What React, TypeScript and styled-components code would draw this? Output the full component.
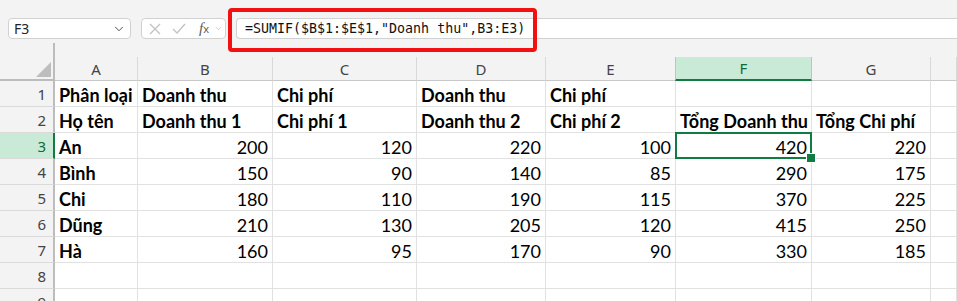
import React from "react";
import styled, { createGlobalStyle, css } from "styled-components";
import { ChevronDown } from "lucide-react";

const GlobalStyle = createGlobalStyle`
  html, body { margin: 0; padding: 0; background: #f3f3f3; }
  body { width: 957px; height: 301px; overflow: hidden; }
  * { box-sizing: border-box; }
`;

const uiFont = `"Noto Sans", "Open Sans", sans-serif`;
const cellFont = `Lato, "Noto Sans", sans-serif`;

const Window = styled.div`
  width: 957px;
  height: 301px;
  background: #f3f3f3;
  display: flex;
  flex-direction: column;
  overflow: hidden;
`;

const FormulaBar = styled.div`
  display: flex;
  align-items: stretch;
  gap: 10px;
  height: 24px;
  margin-top: 18px;
  padding-left: 8px;
`;

const NameBox = styled.div`
  width: 123px;
  background: #fff;
  border: 1px solid #d1d1d1;
  border-radius: 4px;
  display: flex;
  align-items: center;
  justify-content: space-between;
  padding: 0 4px 0 5px;
  font-family: ${uiFont};
  font-size: 14px;
  color: #242424;
`;

const FxBox = styled.div`
  width: 85px;
  background: #fff;
  border: 1px solid #d1d1d1;
  border-radius: 4px;
  display: flex;
  align-items: center;
  padding-left: 7px;
  gap: 11px;
  color: #c4c4c4;
`;

const FxLabel = styled.span`
  display: flex;
  align-items: baseline;
  font-family: "Liberation Serif", serif;
  font-style: italic;
  color: #5c5c5c;
  font-size: 15px;
  margin-left: 2px;
  gap: 0;
  & > small {
    font-family: ${uiFont};
    font-style: normal;
    font-size: 11px;
    margin-left: 0px;
  }
`;

const FormulaInput = styled.div`
  position: relative;
  flex: 1;
  background: #fff;
  border: 1px solid #d1d1d1;
  border-right: none;
  border-radius: 4px 0 0 4px;
  display: flex;
  align-items: center;
  padding-left: 8px;
  font-family: "DejaVu Sans Mono", "Liberation Mono", monospace;
  font-size: 13.3px;
  color: #111;
  white-space: pre;
`;

/* red annotation frame drawn over the start of the formula field */
const Highlight = styled.div`
  position: absolute;
  left: -9px;
  top: -11px;
  width: 309px;
  height: 44px;
  border: 4px solid #f21010;
  border-radius: 4px;
  pointer-events: none;
`;

const Sheet = styled.div`
  display: grid;
  grid-template-columns: 55px 83px 135px 144px 129px 130px 136px 119px 1fr;
  grid-template-rows: 42px repeat(9, 26px);
`;

const Corner = styled.div`
  align-self: end;
  height: 38px;
  border-right: 2px solid #bcbcbc;
  border-bottom: 2px solid #bcbcbc;
  display: flex;
  align-items: flex-end;
  justify-content: flex-end;
  padding: 0 2px 2px 0;
`;

const Triangle = styled.div`
  width: 0;
  height: 0;
  border-left: 15px solid transparent;
  border-bottom: 15px solid #bdbdbd;
`;

const ColHead = styled.div<{ $active?: boolean }>`
  align-self: end;
  height: 24px;
  display: flex;
  align-items: center;
  justify-content: center;
  font-family: ${uiFont};
  font-size: 15px;
  color: #444;
  border-right: 1px solid #d9d9d9;
  border-bottom: 1px solid #c8c8c8;
  ${(p) =>
    p.$active &&
    css`
      background: #caead8;
      color: #0e6b36;
      border-left: 1px solid #9fd6b6;
      border-right: 1px solid #9fd6b6;
      margin-left: -1px;
      border-bottom: 2px solid #107c41;
    `}
`;

const RowHead = styled.div<{ $active?: boolean }>`
  display: flex;
  align-items: center;
  justify-content: flex-end;
  padding-right: 7px;
  font-family: ${uiFont};
  font-size: 15px;
  color: #444;
  border-right: 2px solid #bcbcbc;
  border-bottom: 1px solid #dadada;
  ${(p) =>
    p.$active &&
    css`
      background: #caead8;
      color: #0e6b36;
      border-right: 2px solid #107c41;
    `}
`;

const Cell = styled.div<{ $num?: boolean; $selected?: boolean }>`
  position: relative;
  background: #fff;
  display: flex;
  align-items: center;
  justify-content: ${(p) => (p.$num ? "flex-end" : "flex-start")};
  padding: 2px 4px 0 4px;
  font-family: ${cellFont};
  font-size: 18px;
  font-weight: ${(p) => (p.$num ? 400 : 700)};
  color: #000;
  white-space: nowrap;
  overflow: visible;
  border-right: 1px solid #e1e1e1;
  border-bottom: 1px solid #e1e1e1;
  ${(p) =>
    p.$selected &&
    css`
      &::after {
        content: "";
        position: absolute;
        left: -1px;
        top: -1px;
        right: -1px;
        bottom: -1px;
        border: 2px solid #107c41;
        pointer-events: none;
      }
      &::before {
        content: "";
        position: absolute;
        right: -5px;
        bottom: -5px;
        width: 8px;
        height: 8px;
        background: #107c41;
        border: 1px solid #fff;
        z-index: 2;
      }
    `}
`;

const columns = ["A", "B", "C", "D", "E", "F", "G", ""];

const rows: (string | number | null)[][] = [
  ["Phân loại", "Doanh thu", "Chi phí", "Doanh thu", "Chi phí", null, null, null],
  ["Họ tên", "Doanh thu 1", "Chi phí 1", "Doanh thu 2", "Chi phí 2", "Tổng Doanh thu", "Tổng Chi phí", null],
  ["An", 200, 120, 220, 100, 420, 220, null],
  ["Bình", 150, 90, 140, 85, 290, 175, null],
  ["Chi", 180, 110, 190, 115, 370, 225, null],
  ["Dũng", 210, 130, 205, 120, 415, 250, null],
  ["Hà", 160, 95, 170, 90, 330, 185, null],
  [null, null, null, null, null, null, null, null],
  [null, null, null, null, null, null, null, null],
];

const CloseIcon = () => (
  <svg width="12" height="12" viewBox="0 0 12 12" fill="none" stroke="#c2c2c2" strokeWidth="1.3">
    <path d="M1 1 L11 11 M11 1 L1 11" />
  </svg>
);

const CheckIcon = () => (
  <svg width="14" height="11" viewBox="0 0 14 11" fill="none" stroke="#c2c2c2" strokeWidth="1.3">
    <path d="M1 6 L5 10 L13 1" />
  </svg>
);

export default function App() {
  return (
    <Window>
      <GlobalStyle />
      <FormulaBar>
        <NameBox>
          <span>F3</span>
          <ChevronDown size={14} strokeWidth={1.6} color="#444" />
        </NameBox>
        <FxBox>
          <CloseIcon />
          <CheckIcon />
          <FxLabel>
            f<small>x</small>
          </FxLabel>
          <ChevronDown size={9} strokeWidth={1.6} color="#b0b0b0" style={{ marginLeft: -6 }} />
        </FxBox>
        <FormulaInput>
          <Highlight />
          {'=SUMIF($B$1:$E$1,"Doanh thu",B3:E3)'}
        </FormulaInput>
      </FormulaBar>
      <Sheet>
        <Corner>
          <Triangle />
        </Corner>
        {columns.map((c, i) => (
          <ColHead key={i} $active={c === "F"}>
            {c}
          </ColHead>
        ))}
        {rows.map((r, ri) => (
          <React.Fragment key={ri}>
            <RowHead $active={ri === 2}>{ri + 1}</RowHead>
            {r.map((v, ci) => (
              <Cell key={ci} $num={typeof v === "number"} $selected={ri === 2 && ci === 5}>
                {v ?? ""}
              </Cell>
            ))}
          </React.Fragment>
        ))}
      </Sheet>
    </Window>
  );
}
